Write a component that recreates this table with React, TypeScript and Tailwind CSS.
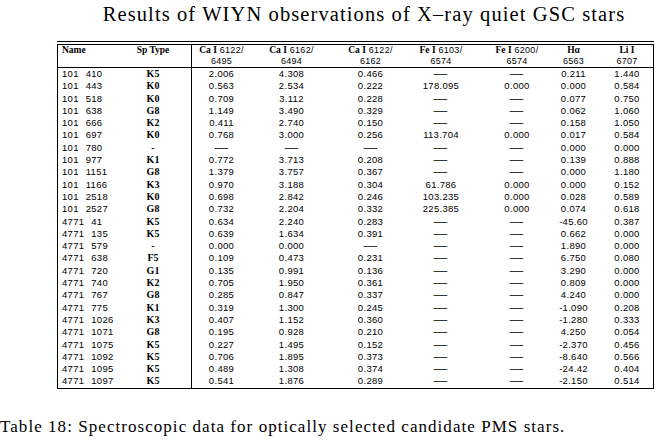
const cols = "grid grid-cols-[57px_77px_65px_74px_75px_75px_65px_55px_52px]";

type Row = [string, string, string, string, string, string, string, string, string];

const D = "—";

const rows: Row[] = [
  ["101 410", "K5", "2.006", "4.308", "0.466", D, D, "0.211", "1.440"],
  ["101 443", "K0", "0.563", "2.534", "0.222", "178.095", "0.000", "0.000", "0.584"],
  ["101 518", "K0", "0.709", "3.112", "0.228", D, D, "0.077", "0.750"],
  ["101 638", "G8", "1.149", "3.490", "0.329", D, D, "0.062", "1.060"],
  ["101 666", "K2", "0.411", "2.740", "0.150", D, D, "0.158", "1.050"],
  ["101 697", "K0", "0.768", "3.000", "0.256", "113.704", "0.000", "0.017", "0.584"],
  ["101 780", "-", D, D, D, D, D, "0.000", "0.000"],
  ["101 977", "K1", "0.772", "3.713", "0.208", D, D, "0.139", "0.888"],
  ["101 1151", "G8", "1.379", "3.757", "0.367", D, D, "0.000", "1.180"],
  ["101 1166", "K3", "0.970", "3.188", "0.304", "61.786", "0.000", "0.000", "0.152"],
  ["101 2518", "K0", "0.698", "2.842", "0.246", "103.235", "0.000", "0.028", "0.589"],
  ["101 2527", "G8", "0.732", "2.204", "0.332", "225.385", "0.000", "0.074", "0.618"],
  ["4771 41", "K5", "0.634", "2.240", "0.283", D, D, "-45.60", "0.387"],
  ["4771 135", "K5", "0.639", "1.634", "0.391", D, D, "0.662", "0.000"],
  ["4771 579", "-", "0.000", "0.000", D, D, D, "1.890", "0.000"],
  ["4771 638", "F5", "0.109", "0.473", "0.231", D, D, "6.750", "0.080"],
  ["4771 720", "G1", "0.135", "0.991", "0.136", D, D, "3.290", "0.000"],
  ["4771 740", "K2", "0.705", "1.950", "0.361", D, D, "0.809", "0.000"],
  ["4771 767", "G8", "0.285", "0.847", "0.337", D, D, "4.240", "0.000"],
  ["4771 775", "K1", "0.319", "1.300", "0.245", D, D, "-1.090", "0.208"],
  ["4771 1026", "K3", "0.407", "1.152", "0.360", D, D, "-1.280", "0.333"],
  ["4771 1071", "G8", "0.195", "0.928", "0.210", D, D, "4.250", "0.054"],
  ["4771 1075", "K5", "0.227", "1.495", "0.152", D, D, "-2.370", "0.456"],
  ["4771 1092", "K5", "0.706", "1.895", "0.373", D, D, "-8.640", "0.566"],
  ["4771 1095", "K5", "0.489", "1.308", "0.374", D, D, "-24.42", "0.404"],
  ["4771 1097", "K5", "0.541", "1.876", "0.289", D, D, "-2.150", "0.514"],
];

const headers: [string, string, string][] = [
  ["Ca I", "6122/", "6495"],
  ["Ca I", "6162/", "6494"],
  ["Ca I", "6122/", "6162"],
  ["Fe I", "6103/", "6574"],
  ["Fe I", "6200/", "6574"],
  ["Hα", "", "6563"],
  ["Li I", "", "6707"],
];

// per-column nudges so the centred text sits where the reference has it
const shift = ["pr-[6px]", "pr-[5px]", "pl-[4px]", "pr-[5px]", "pl-[7px]", "", ""];

const Cell = ({ v }: { v: string }) =>
  v === D ? (
    <span className="inline-block text-[11px] leading-none scale-x-[1.25]">—</span>
  ) : (
    <span>{v}</span>
  );

export default function App() {
  return (
    <div className="w-[656px] h-[445px] bg-white text-black overflow-hidden font-['Liberation_Serif',serif]">
      <div className="h-[41px] pt-[4px] pl-[72px] text-center text-[20.5px] leading-[20px] tracking-[1.1px] whitespace-nowrap">
        Results of WIYN observations of X–ray quiet GSC stars
      </div>

      <div className="ml-[57px] w-[597px]">
        <div className="h-px bg-black" />
        <div className="h-[2px]" />
        <div className="border-t border-b border-l border-r border-black">
          <div className={`${cols} h-[22px] text-[9.5px] leading-[11px]`}>
            <div className="pl-[4px] font-bold">Name</div>
            <div className="border-r border-black text-center font-bold">Sp Type</div>
            {headers.map(([a, b, c], i) => (
              <div key={i} className={`text-center whitespace-nowrap ${shift[i]}`}>
                <div>
                  <span className="font-bold">{a}</span>
                  {b && <span className="font-['Liberation_Sans',sans-serif] text-[9px] tracking-[0.3px]"> {b}</span>}
                </div>
                <div className="font-['Liberation_Sans',sans-serif] text-[9px] tracking-[0.3px]">{c}</div>
              </div>
            ))}
          </div>
        </div>
        <div className="border-b border-l border-r border-black pb-[0.3px]">
          {rows.map((r) => (
            <div key={r[0]} className={`${cols} h-[12.3px] text-[9.5px] leading-[12.3px] tracking-[0.3px] font-['Liberation_Sans',sans-serif]`}>
              <div className="pl-[4px] whitespace-nowrap [word-spacing:4px]">{r[0]}</div>
              <div className="border-r border-black text-center font-bold font-['Liberation_Serif',serif] text-[10px] tracking-normal">{r[1]}</div>
              {r.slice(2).map((v, i) => (
                <div key={i} className={`text-center whitespace-nowrap ${shift[i]}`}>
                  <Cell v={v} />
                </div>
              ))}
            </div>
          ))}
        </div>
      </div>

      <div className="pt-[28px] text-[17px] leading-[20px] tracking-[1.05px] whitespace-nowrap">
        Table 18: Spectroscopic data for optically selected candidate PMS stars.
      </div>
    </div>
  );
}
